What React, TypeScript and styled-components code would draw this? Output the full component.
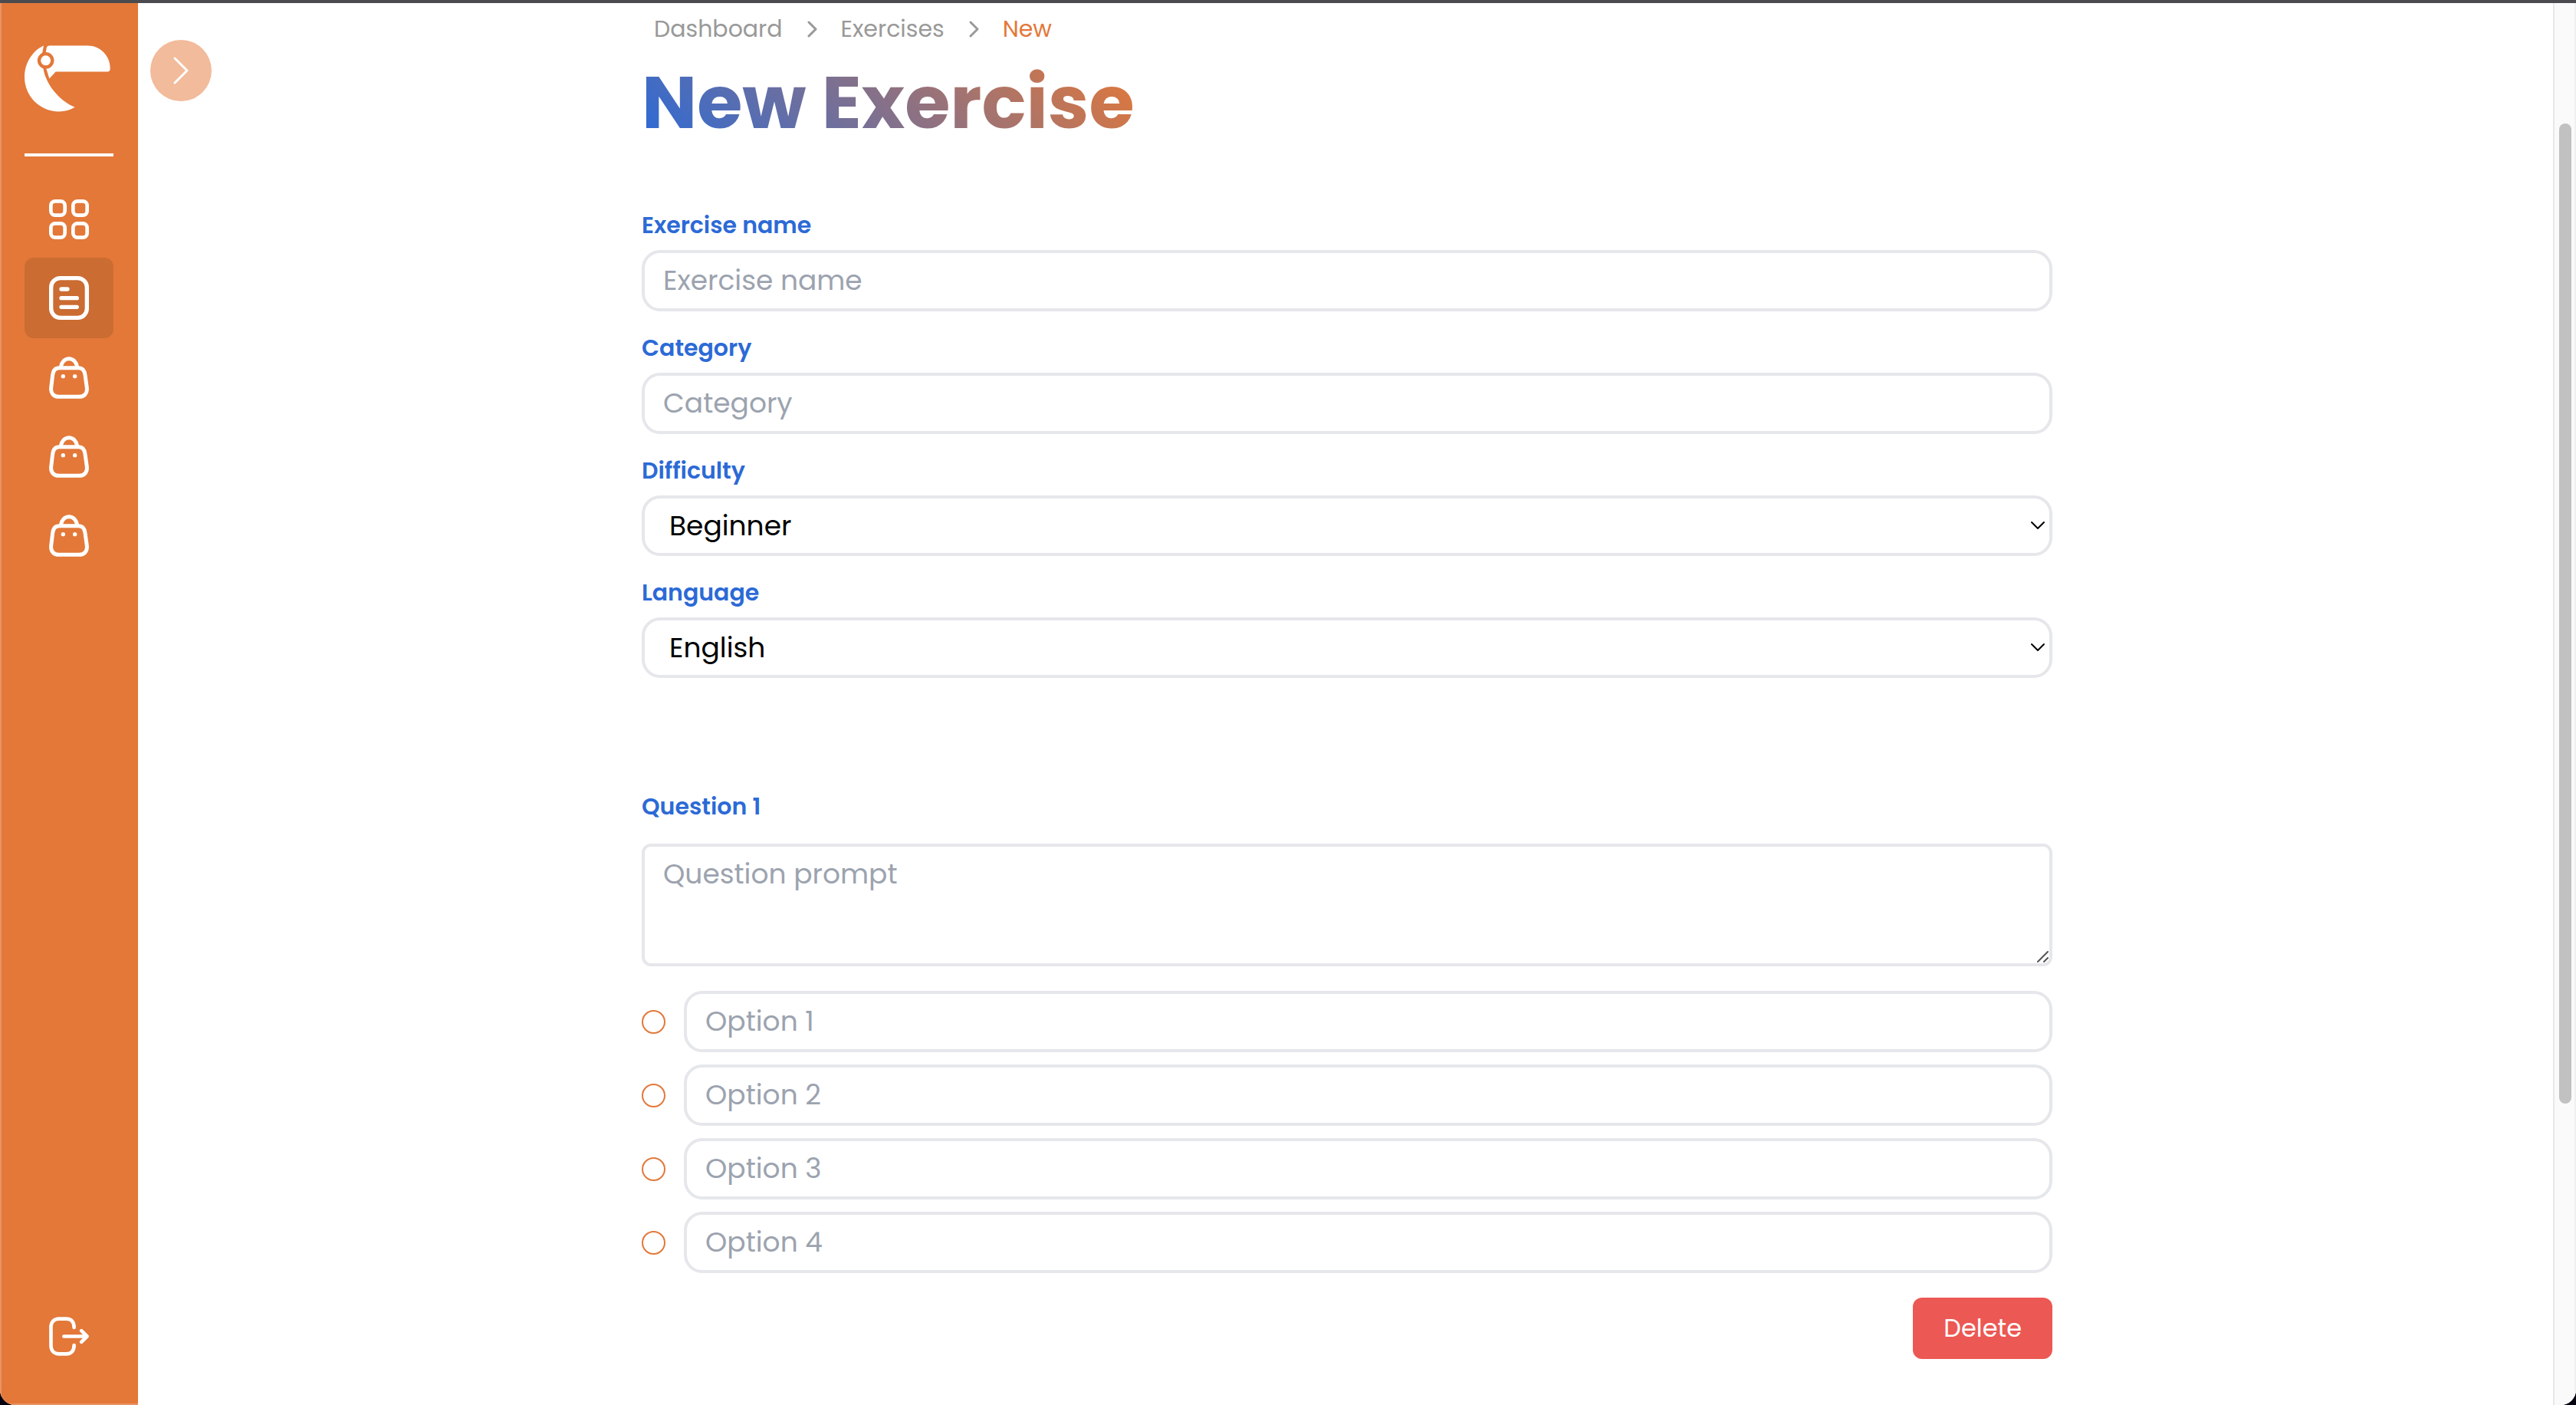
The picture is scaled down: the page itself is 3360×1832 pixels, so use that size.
import React from "react";
import styled, { createGlobalStyle } from "styled-components";

const orange = "#e37839";
const blue = "#2c6ad6";
const line = "#e5e7eb";
const muted = "#9ca3af";

const GlobalStyle = createGlobalStyle`
  *, *::before, *::after { box-sizing: border-box; }
  html, body { margin: 0; padding: 0; background: #04030f; }
  body, button, input, select, textarea {
    font-family: Poppins, Inter, "Open Sans", sans-serif;
  }
`;

const Window = styled.div`
  display: grid;
  grid-template-columns: 180px 1fr 30px;
  height: 100vh;
  overflow: hidden;
  background: #fff;
  border-top: 4px solid #4b4b4f;
  border-radius: 0 0 20px 20px;
`;

const Sidebar = styled.aside`
  display: flex;
  flex-direction: column;
  padding: 55px 32px 38px 30px;
  background: ${orange};
  border-left: 2px solid #e99365;
  border-bottom: 2px solid #e99365;
  color: #fff;
`;

const LogoLink = styled.a`
  display: flex;
  padding-bottom: 54px;
  border-bottom: 4px solid #fff;
  color: inherit;
`;

const Nav = styled.nav`
  display: flex;
  flex-direction: column;
  flex: 1;
  padding-top: 32px;
`;

const NavLink = styled.a<{ $active?: boolean; $last?: boolean }>`
  display: flex;
  justify-content: center;
  padding: 24px 0;
  margin-top: ${(p) => (p.$last ? "auto" : "0")};
  border-radius: 12px;
  background: ${(p) => (p.$active ? "#cb6c32" : "transparent")};
  color: inherit;
`;

const Icon = styled.svg`
  display: block;
  fill: none;
  stroke: currentColor;
  stroke-linecap: round;
  stroke-linejoin: round;
`;

const Main = styled.main`
  position: relative;
  padding: 14px 24px 60px 28px;
  overflow: hidden;
`;

const ExpandButton = styled.button`
  position: absolute;
  top: 48px;
  left: 16px;
  display: grid;
  place-items: center;
  width: 80px;
  height: 80px;
  padding: 0;
  border: 0;
  border-radius: 50%;
  background: #f2bb9b;
  color: #fff;
`;

const Page = styled.div`
  display: flex;
  flex-direction: column;
  max-width: 1840px;
  margin: 0 auto;
`;

const Breadcrumbs = styled.nav`
  display: flex;
  align-items: center;
  gap: 31px;
  padding-left: 16px;
  font-size: 30px;
  line-height: 40px;
  color: #999;
`;

const Crumb = styled.a<{ $current?: boolean }>`
  color: ${(p) => (p.$current ? orange : "inherit")};
  text-decoration: none;
`;

const Title = styled.h1`
  width: fit-content;
  margin: 28px 0 92px;
  font-size: 96px;
  font-weight: 700;
  line-height: 96px;
  color: transparent;
  background: linear-gradient(45deg, ${blue}, ${orange});
  background-clip: text;
  -webkit-background-clip: text;
`;

const Form = styled.form`
  display: flex;
  flex-direction: column;
  gap: 148px;
`;

const Fields = styled.div`
  display: flex;
  flex-direction: column;
  gap: 28px;
`;

const Field = styled.div`
  display: flex;
  flex-direction: column;
  gap: 12px;
`;

const Label = styled.label`
  width: fit-content;
  font-size: 30px;
  font-weight: 600;
  line-height: 40px;
  color: ${blue};
`;

const TextInput = styled.input`
  flex: 1;
  width: 100%;
  min-height: 80px;
  padding: 0 24px;
  border: 4px solid ${line};
  border-radius: 24px;
  background: #fff;
  font-size: 36px;
  line-height: 48px;
  &::placeholder { color: ${muted}; opacity: 1; }
`;

const Overlaid = styled.div`
  position: relative;
  display: flex;
`;

const Select = styled.select`
  appearance: none;
  width: 100%;
  height: 79px;
  padding: 0 32px;
  border: 4px solid ${line};
  border-radius: 24px;
  background: #fff;
  color: #000;
  font-size: 36px;
  line-height: 48px;
`;

const SelectArrow = styled(Icon)`
  position: absolute;
  top: 33px;
  right: 9px;
  pointer-events: none;
`;

const Question = styled.section`
  display: flex;
  flex-direction: column;
`;

const Prompt = styled.textarea`
  width: 100%;
  height: 160px;
  padding: 12px 24px;
  border: 4px solid ${line};
  border-radius: 12px;
  resize: none;
  font-size: 36px;
  line-height: 48px;
  &::placeholder { color: ${muted}; opacity: 1; }
`;

const Grip = styled(Icon)`
  position: absolute;
  right: 5px;
  bottom: 5px;
  pointer-events: none;
`;

const PromptField = styled(Overlaid)`
  margin-top: 28px;
`;

const Options = styled.div`
  display: flex;
  flex-direction: column;
  gap: 16px;
  margin: 32px 0;
`;

const OptionRow = styled.div`
  display: flex;
  align-items: center;
  gap: 24px;
`;

const Radio = styled.input`
  appearance: none;
  flex: none;
  width: 31px;
  height: 31px;
  margin: 0;
  border: 2px solid ${orange};
  border-radius: 50%;
  background: #fff;
  &:checked { background: ${orange}; box-shadow: inset 0 0 0 5px #fff; }
`;

const DeleteButton = styled.button`
  align-self: flex-end;
  height: 80px;
  padding: 0 40px;
  border: 0;
  border-radius: 12px;
  background: #ec5853;
  color: #fff;
  font-size: 32px;
  line-height: 48px;
`;

const ScrollTrack = styled.div`
  display: flex;
  flex-direction: column;
  padding: 0 4px 0 6px;
  background: #fafafa;
  border-left: 2px solid #e8e8e8;
  border-right: 2px solid #f0f0f0;
`;

const ScrollSpace = styled.div<{ $grow: number }>`
  flex: ${(p) => p.$grow} 0 0;
`;

const ScrollThumb = styled(ScrollSpace)`
  border-radius: 8px;
  background: #c1c1c1;
`;

const Logo = () => (
  <svg width="112" height="87" viewBox="96 176 336 260" fill="currentColor" aria-hidden="true">
    <path d="M171 177C125 198 96 247 96 300C96 375 157 435 231 435C253 435 275 429 293 418C229 390 180 328 169 266L165 208Z" />
    <path d="M194 177H343C392 177 431 217 431 264V268Q431 279 420 279H218L193 306L181 266L179 205L182 187Q184 177 194 177Z" />
    <circle cx="179" cy="235" r="26" stroke={orange} strokeWidth="13" />
  </svg>
);

const DashboardIcon = () => (
  <Icon width="52" height="52" viewBox="192 780 156 156" strokeWidth="14" aria-hidden="true">
    <rect x="199" y="787" width="55" height="55" rx="17" />
    <rect x="286" y="787" width="55" height="55" rx="17" />
    <rect x="199" y="874" width="55" height="55" rx="17" />
    <rect x="286" y="874" width="55" height="55" rx="17" />
  </Icon>
);

const ExerciseIcon = () => (
  <Icon width="52" height="57" viewBox="192 1080 156 171" strokeWidth="16" aria-hidden="true">
    <rect x="200" y="1088" width="140" height="155" rx="36" />
    <path d="M240 1131H264M240 1166H301M240 1201H301" />
  </Icon>
);

const BagIcon = () => (
  <Icon width="52" height="55" viewBox="192 14 156 165" strokeWidth="15" aria-hidden="true">
    <path d="M232 58H308C324 58 331 69 333 86L340 136C342 158 330 171 309 171H231C210 171 198 158 200 136L206 86C208 69 216 58 232 58Z" />
    <path d="M238 54C242 34 254 22 270 22C286 22 298 34 302 54" />
    <circle cx="247" cy="91" r="8" fill="currentColor" stroke="none" />
    <circle cx="293" cy="91" r="8" fill="currentColor" stroke="none" />
  </Icon>
);

const LogoutIcon = () => (
  <Icon width="52" height="51" viewBox="192 170 156 154" strokeWidth="14" aria-hidden="true">
    <path d="M290 212C290 190 279 178 260 178H231C211 178 199 191 199 211V283C199 303 211 316 231 316H260C279 316 290 304 290 282" />
    <path d="M250 247H338M319 225L341 247L319 269" />
  </Icon>
);

const CrumbChevron = () => (
  <Icon width="14" height="22" viewBox="0 0 14 22" strokeWidth="3" aria-hidden="true">
    <path d="M3 2L12 11L3 20" />
  </Icon>
);

const options = [1, 2, 3, 4];

export default function App() {
  return (
    <>
      <GlobalStyle />
      <Window>
        <Sidebar>
          <LogoLink href="#home" aria-label="Home">
            <Logo />
          </LogoLink>
          <Nav aria-label="Main">
            <NavLink href="#dashboard" aria-label="Dashboard"><DashboardIcon /></NavLink>
            <NavLink href="#exercises" aria-label="Exercises" $active><ExerciseIcon /></NavLink>
            <NavLink href="#shop" aria-label="Shop"><BagIcon /></NavLink>
            <NavLink href="#orders" aria-label="Orders"><BagIcon /></NavLink>
            <NavLink href="#products" aria-label="Products"><BagIcon /></NavLink>
            <NavLink href="#logout" aria-label="Log out" $last><LogoutIcon /></NavLink>
          </Nav>
        </Sidebar>

        <Main>
          <ExpandButton type="button" aria-label="Expand menu">
            <Icon width="22" height="38" viewBox="0 0 22 38" strokeWidth="3" aria-hidden="true">
              <path d="M3 3L19 19L3 35" />
            </Icon>
          </ExpandButton>
          <Page>
            <Breadcrumbs aria-label="Breadcrumb">
              <Crumb href="#dashboard">Dashboard</Crumb>
              <CrumbChevron />
              <Crumb href="#exercises">Exercises</Crumb>
              <CrumbChevron />
              <Crumb href="#new" $current aria-current="page">New</Crumb>
            </Breadcrumbs>
            <Title>New Exercise</Title>
            <Form onSubmit={(e) => e.preventDefault()}>
              <Fields>
                <Field>
                  <Label htmlFor="name">Exercise name</Label>
                  <TextInput id="name" placeholder="Exercise name" />
                </Field>
                <Field>
                  <Label htmlFor="category">Category</Label>
                  <TextInput id="category" placeholder="Category" />
                </Field>
                <Field>
                  <Label htmlFor="difficulty">Difficulty</Label>
                  <Overlaid>
                    <Select id="difficulty">
                      <option>Beginner</option>
                    </Select>
                    <SelectArrow width="20" height="12" viewBox="0 0 20 12" strokeWidth="2" aria-hidden="true">
                      <path d="M2 2L10 10L18 2" stroke="#000" />
                    </SelectArrow>
                  </Overlaid>
                </Field>
                <Field>
                  <Label htmlFor="language">Language</Label>
                  <Overlaid>
                    <Select id="language">
                      <option>English</option>
                    </Select>
                    <SelectArrow width="20" height="12" viewBox="0 0 20 12" strokeWidth="2" aria-hidden="true">
                      <path d="M2 2L10 10L18 2" stroke="#000" />
                    </SelectArrow>
                  </Overlaid>
                </Field>
              </Fields>

              <Question>
                <Label htmlFor="prompt">Question 1</Label>
                <PromptField>
                  <Prompt id="prompt" placeholder="Question prompt" />
                  <Grip width="15" height="15" viewBox="0 0 15 15" strokeWidth="2" aria-hidden="true">
                    <path d="M1 14L14 1M9 14L14 9" stroke="#555" />
                  </Grip>
                </PromptField>
                <Options>
                  {options.map((n) => (
                    <OptionRow key={n}>
                      <Radio type="radio" name="answer" aria-label={`Option ${n} is correct`} />
                      <TextInput aria-label={`Option ${n}`} placeholder={`Option ${n}`} />
                    </OptionRow>
                  ))}
                </Options>
                <DeleteButton type="button">Delete</DeleteButton>
              </Question>
            </Form>
          </Page>
        </Main>

        <ScrollTrack aria-hidden="true">
          <ScrollSpace $grow={157} />
          <ScrollThumb $grow={1278} />
          <ScrollSpace $grow={393} />
        </ScrollTrack>
      </Window>
    </>
  );
}
